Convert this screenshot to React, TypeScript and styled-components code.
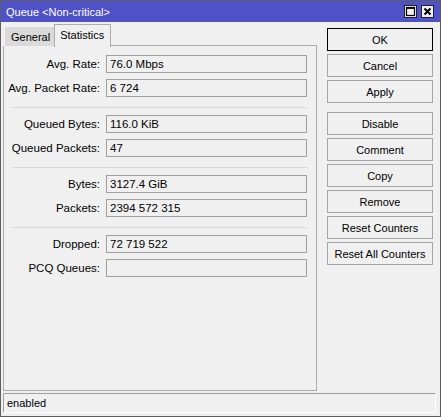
import styled, { createGlobalStyle } from "styled-components";

type field = {
    label: string;
    value: string;
};

const groups: field[][] = [
    [
        { label: "Avg. Rate:", value: "76.0 Mbps" },
        { label: "Avg. Packet Rate:", value: "6 724" },
    ],
    [
        { label: "Queued Bytes:", value: "116.0 KiB" },
        { label: "Queued Packets:", value: "47" },
    ],
    [
        { label: "Bytes:", value: "3127.4 GiB" },
        { label: "Packets:", value: "2394 572 315" },
    ],
    [
        { label: "Dropped:", value: "72 719 522" },
        { label: "PCQ Queues:", value: "" },
    ],
];

const topButtons = ["OK", "Cancel", "Apply"];
const bottomButtons = ["Disable", "Comment", "Copy", "Remove", "Reset Counters", "Reset All Counters"];

function App() {
    return (
        <>
            <GlobalStyle />
            <Window>
                <TitleBar>
                    <span>Queue &lt;Non-critical&gt;</span>
                    <TitleButtons>
                        <TitleButton>
                            <svg width="11" height="11" viewBox="0 0 11 11">
                                <rect x="1.5" y="1.5" width="8" height="8" fill="none" stroke="#000" strokeWidth="1.2" />
                                <line x1="1.5" y1="2.2" x2="9.5" y2="2.2" stroke="#000" strokeWidth="1.4" />
                            </svg>
                        </TitleButton>
                        <TitleButton>
                            <svg width="11" height="11" viewBox="0 0 11 11">
                                <path d="M2.5 2.5 L8.5 8.5 M8.5 2.5 L2.5 8.5" stroke="#000" strokeWidth="1.9" />
                            </svg>
                        </TitleButton>
                    </TitleButtons>
                </TitleBar>
                <Body>
                    <LeftColumn>
                        <Tabs>
                            <Tab>General</Tab>
                            <Tab $active>Statistics</Tab>
                            <TabFill />
                        </Tabs>
                        <Panel>
                            {groups.map((group, gi) => (
                                <Group key={gi}>
                                    {gi > 0 && <Separator />}
                                    {group.map((f) => (
                                        <Row key={f.label}>
                                            <Label>{f.label}</Label>
                                            <Field>{f.value}</Field>
                                        </Row>
                                    ))}
                                </Group>
                            ))}
                        </Panel>
                    </LeftColumn>
                    <ButtonColumn>
                        <ButtonGroup>
                            {topButtons.map((b) => (
                                <Button key={b} $primary={b === "OK"}>
                                    {b}
                                </Button>
                            ))}
                        </ButtonGroup>
                        <ButtonGroup>
                            {bottomButtons.map((b) => (
                                <Button key={b}>{b}</Button>
                            ))}
                        </ButtonGroup>
                    </ButtonColumn>
                </Body>
                <StatusBar>enabled</StatusBar>
            </Window>
        </>
    );
}

export default App;

const GlobalStyle = createGlobalStyle`
    html, body {
        margin: 0;
        padding: 0;
        background: #f0f0f0;
    }
    * {
        box-sizing: border-box;
    }
`;

const Window = styled.div`
    width: 441px;
    height: 417px;
    display: flex;
    flex-direction: column;
    background-color: #f0f0f0;
    border: 1px solid #5e5e5e;
    font-family: "Liberation Sans", Arial, sans-serif;
    font-size: 11px;
    color: #000;
`;

const TitleBar = styled.div`
    height: 21px;
    display: flex;
    justify-content: space-between;
    align-items: center;
    padding: 0 6px 0 5px;
    background-color: #4e51c7;
    color: white;
    font-size: 11px;
`;

const TitleButtons = styled.div`
    display: flex;
    gap: 4px;
`;

const TitleButton = styled.div`
    width: 13px;
    height: 13px;
    display: flex;
    justify-content: center;
    align-items: center;
    background-color: #f0f0f0;
    border: 1px solid #222;
`;

const Body = styled.div`
    display: flex;
    gap: 10px;
    padding: 2px 7px 0 2px;
`;

const LeftColumn = styled.div`
    width: 314px;
    display: flex;
    flex-direction: column;
`;

const Tabs = styled.div`
    height: 22px;
    display: flex;
    align-items: flex-end;
    padding-left: 2px;
`;

const Tab = styled.div<{ $active?: boolean }>`
    height: ${(p) => (p.$active ? "23px" : "19px")};
    display: flex;
    align-items: center;
    padding: ${(p) => (p.$active ? "0 6px 3px 5px" : "0 3px 0 5px")};
    background-color: ${(p) => (p.$active ? "#f0f0f0" : "#dadada")};
    border: 1px solid ${(p) => (p.$active ? "#adadad" : "#dadada")};
    border-bottom: none;
    margin-bottom: ${(p) => (p.$active ? "-1px" : "0")};
    position: relative;
    z-index: ${(p) => (p.$active ? 1 : 0)};
`;

const TabFill = styled.div`
    flex: 1;
    border-bottom: 1px solid #adadad;
`;

const Panel = styled.div`
    height: 345px;
    padding: 9px 9px 0 0;
    border: 1px solid #adadad;
    border-top: none;
    display: flex;
    flex-direction: column;
`;

const Group = styled.div`
    display: flex;
    flex-direction: column;
    gap: 6px;
`;

const Separator = styled.div`
    height: 1px;
    margin: 10px 0 1px 8px;
    background-color: #d7d7d7;
`;

const Row = styled.div`
    display: flex;
    align-items: center;
`;

const Label = styled.div`
    width: 96px;
    margin-right: 6px;
    text-align: right;
    white-space: nowrap;
    font-size: 11.5px;
`;

const Field = styled.div`
    width: 201px;
    height: 18px;
    display: flex;
    align-items: center;
    padding-left: 3px;
    background-color: #f0f0f0;
    border: 1px solid #a0a0a0;
    font-size: 11.5px;
`;

const ButtonColumn = styled.div`
    width: 106px;
    display: flex;
    flex-direction: column;
    gap: 9px;
    padding-top: 4px;
`;

const ButtonGroup = styled.div`
    display: flex;
    flex-direction: column;
    gap: 3px;
`;

const Button = styled.div<{ $primary?: boolean }>`
    height: 23px;
    display: flex;
    justify-content: center;
    align-items: center;
    background-color: #f0f0f0;
    border: 1px solid ${(p) => (p.$primary ? "#000" : "#a5a5a5")};
    white-space: nowrap;
`;

const StatusBar = styled.div`
    height: 20px;
    margin: 2px 4px 0 2px;
    padding-left: 3px;
    display: flex;
    align-items: center;
    border-top: 1px solid #a0a0a0;
    border-left: 1px solid #a0a0a0;
    border-right: 1px solid #ffffff;
    border-bottom: 1px solid #ffffff;
`;
